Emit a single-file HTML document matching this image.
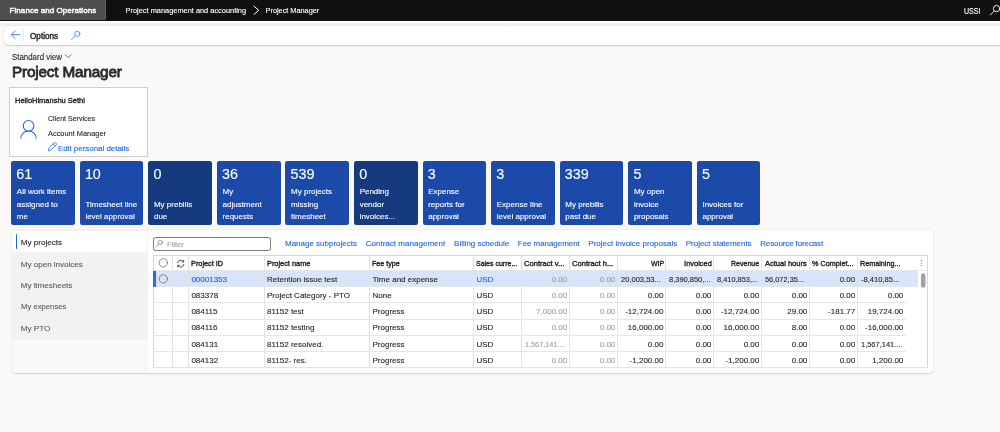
<!DOCTYPE html>
<html lang="en">
<head>
<meta charset="utf-8">
<title>Project Manager</title>
<style>
html,body{margin:0;padding:0;}
body{width:1000px;height:432px;overflow:hidden;background:#faf9f8;position:relative;
 font-family:"Liberation Sans",sans-serif;font-size:8px;color:#292827;-webkit-text-stroke:0.12px;}
.a{position:absolute;white-space:nowrap;line-height:1;}
.b{font-weight:700;}
#top{left:0;top:0;width:1000px;height:20.5px;background:#11100f;}
#fo{left:0;top:0;width:106.4px;height:20px;background:#504e4c;border-bottom-right-radius:2.5px;box-shadow:inset -0.7px 0 0 #6e6c6a;}
#strip{left:0;top:20.5px;width:1000px;height:5px;background:linear-gradient(#fff 0,#fff 35%,#f3f2f1 45%,#f5f4f3 100%);}
#tb{left:4px;top:25.5px;width:1000px;height:19.5px;background:#fff;border-radius:5px 0 0 5px;box-shadow:0 0.5px 1.5px rgba(0,0,0,.2);}
.lnk{color:#2266e3;}
#card{left:9.2px;top:87.2px;width:136.6px;height:67.6px;background:#fff;border:0.7px solid #d0cecc;}
.tile{position:absolute;top:160.9px;width:63.6px;height:63.9px;background:#1c4aa9;border-radius:2.2px;color:#fff;}
.tile.dk{background:#163a7f;}
.tile .n{position:absolute;left:5.4px;top:6.2px;font-size:13.7px;line-height:1;white-space:nowrap;}
.tile .l{position:absolute;left:5.7px;bottom:4.2px;font-size:8px;line-height:12.15px;white-space:nowrap;}
#panel{left:11.6px;top:229.8px;width:921.6px;height:143.6px;background:#fff;border-radius:4px;box-shadow:0 0.2px 0.6px rgba(0,0,0,.12),0 0.9px 2.1px rgba(0,0,0,.14);overflow:hidden;}
#left{left:0;top:0;width:136.5px;height:143.6px;background:#faf9f8;}
#tabs{left:0;top:0;width:136.5px;height:109.8px;background:#f3f2f1;}
#sel{left:0.7px;top:1.2px;width:134.4px;height:21.1px;background:#fff;border-radius:2.5px 1.8px 1.8px 2.5px;}
#selbar{left:4.1px;top:4.6px;width:1.5px;height:14.6px;background:#2266e3;border-radius:1px;}
.tab{left:9.2px;font-size:8.6px;color:#605e5c;}
#filter{left:153.3px;top:237.2px;width:118.2px;height:13.9px;box-sizing:border-box;border:0.95px solid #807e7c;border-radius:2.2px;background:#fff;}
#grid{left:153.2px;top:255.4px;width:775px;height:112.4px;border:0.6px solid #d8d6d4;border-bottom-color:#e4e2e0;box-sizing:border-box;background:#fff;}
.vl{position:absolute;top:255.4px;width:0.6px;height:112.4px;background:#e4e2e0;}
.hl{position:absolute;left:153.2px;width:752.6px;height:0.6px;background:#e8e6e4;}
#rowsel{left:153.5px;top:270.7px;width:764.3px;height:16.1px;background:#d8e4fa;}
#rowbar{left:153.4px;top:270.7px;width:2.2px;height:16.1px;background:#2b6be6;}
.c{position:absolute;white-space:nowrap;line-height:1;font-size:8px;}
.r{text-align:right;}
.g{color:#a19f9d;}
</style>
</head>
<body>
<div id="app" class="a" style="left:0;top:0;width:1000px;height:432px;will-change:transform">
<div class="a" id="top"></div>
<div class="a" id="fo"></div>
<div class="a" id="strip"></div>
<div class="a" id="tb"></div>
<div class="a" id="card"></div>
<div class="a" id="panel"><div class="a" id="left"></div><div class="a" id="tabs"></div><div class="a" id="sel"></div><div class="a" id="selbar"></div></div>
<div class="a" id="filter"></div>
<div class="a" id="grid"></div>
<div class="tile" style="left:11.24px"></div>
<div class="tile" style="left:79.80px"></div>
<div class="tile dk" style="left:148.36px"></div>
<div class="tile" style="left:216.92px"></div>
<div class="tile" style="left:285.48px"></div>
<div class="tile dk" style="left:354.04px"></div>
<div class="tile" style="left:422.60px"></div>
<div class="tile" style="left:491.16px"></div>
<div class="tile" style="left:559.72px"></div>
<div class="tile" style="left:628.28px"></div>
<div class="tile" style="left:696.84px"></div>
<div class="a" id="rowsel"></div>
<div class="vl" style="left:172.10px"></div>
<div class="vl" style="left:188.10px"></div>
<div class="vl" style="left:263.70px"></div>
<div class="vl" style="left:369.20px"></div>
<div class="vl" style="left:473.20px"></div>
<div class="vl" style="left:521.20px"></div>
<div class="vl" style="left:569.20px"></div>
<div class="vl" style="left:617.30px"></div>
<div class="vl" style="left:665.40px"></div>
<div class="vl" style="left:713.30px"></div>
<div class="vl" style="left:761.20px"></div>
<div class="vl" style="left:809.30px"></div>
<div class="vl" style="left:857.20px"></div>
<div class="hl" style="top:270.00px;width:775px"></div>
<div class="hl" style="top:286.20px"></div>
<div class="hl" style="top:302.40px"></div>
<div class="hl" style="top:318.60px"></div>
<div class="hl" style="top:334.80px"></div>
<div class="hl" style="top:351.00px"></div>
<div class="a" id="rowbar"></div>
<svg class="a" style="left:0;top:0" width="1000" height="432" viewBox="0 0 1000 432" fill="none" stroke-linecap="round" stroke-linejoin="round">
<!-- breadcrumb chevron -->
<path d="M254 6.2 L258.8 10.3 L254 14.4" stroke="#fff" stroke-width="1"/>
<!-- top-right search -->
<circle cx="996.6" cy="8.6" r="3.2" stroke="#fff" stroke-width="0.9"/>
<path d="M994.3 11 L990.3 15" stroke="#fff" stroke-width="0.9"/>
<!-- back arrow -->
<path d="M20 34.7 H11.4 M15.3 30.9 L11.3 34.7 L15.3 38.6" stroke="#2266e3" stroke-width="0.8"/>
<!-- separator -->
<path d="M23.5 29 V41.5" stroke="#e1dfdd" stroke-width="0.6"/>
<!-- toolbar search -->
<circle cx="77.3" cy="33.85" r="2.6" stroke="#2266e3" stroke-width="0.7"/>
<path d="M75.4 35.8 L71.6 39.6" stroke="#2266e3" stroke-width="0.7"/>
<!-- view chevron -->
<path d="M65.3 54.8 L68.2 57.7 L71.1 54.8" stroke="#323130" stroke-width="0.65"/>
<!-- person -->
<circle cx="28.55" cy="125.8" r="5.35" stroke="#2266e3" stroke-width="1.05"/>
<path d="M20.7 138.7 A7.8 7.8 0 0 1 36.3 138.7" stroke="#2266e3" stroke-width="1.05" stroke-linecap="butt"/>
<!-- pencil -->
<path d="M48.4 150.5 L49.2 147.6 L54.2 142.9 Q55.3 142.3 56.1 143.2 Q56.9 144.2 56.1 145.1 L51.2 149.7 Z M53.2 143.9 L55.1 146" stroke="#2266e3" stroke-width="0.75"/>
<!-- filter magnifier -->
<circle cx="160.4" cy="242.5" r="2.15" stroke="#777573" stroke-width="0.7"/>
<path d="M158.8 244.1 L156 246.8" stroke="#777573" stroke-width="0.7"/>
<!-- header / row circles -->
<circle cx="163.3" cy="262.8" r="4.15" stroke="#605e5c" stroke-width="0.7" fill="#fff"/>
<circle cx="163.3" cy="278.85" r="4.15" stroke="#605e5c" stroke-width="0.7"/>
<!-- refresh -->
<g stroke="#323130" stroke-width="0.8" transform="translate(0.2,0.35)">
<path d="M177.3 262.5 A3.3 3.3 0 0 1 183.3 261.3"/>
<path d="M183.7 264 A3.3 3.3 0 0 1 177.7 265.2"/>
<path d="M183.5 259.9 V261.5 H181.9"/>
<path d="M177.5 266.6 V265 H179.1"/>
</g>
<!-- grid options dots -->
<g fill="#484644" stroke="none"><circle cx="921.3" cy="260.4" r="0.55"/><circle cx="921.3" cy="263" r="0.55"/><circle cx="921.3" cy="265.6" r="0.55"/></g>
<!-- scrollbar thumb -->
<rect x="920.9" y="273.3" width="4.6" height="14.4" rx="2.3" fill="#a3a2a0" stroke="none"/>
</svg>

<span class="a" style="top:6px;line-height:9px;font-size:8px;color:#fff;-webkit-text-stroke:0.40px;letter-spacing:0.055px;left:9.60px">Finance and Operations</span>
<span class="a" style="top:6px;line-height:9px;font-size:7.4px;color:#fff;letter-spacing:0.003px;left:125.60px">Project management and accounting</span>
<span class="a" style="top:6px;line-height:9px;font-size:7.4px;color:#fff;letter-spacing:-0.042px;left:265.60px">Project Manager</span>
<span class="a" style="top:6px;line-height:10px;font-size:8.5px;color:#fff;left:964.00px;transform:scaleX(0.8315);transform-origin:left center">USSI</span>
<span class="a" style="top:31px;line-height:10px;font-size:8.6px;color:#292827;-webkit-text-stroke:0.43px;left:29.60px;transform:scaleX(0.9516);transform-origin:left center">Options</span>
<span class="a" style="top:52px;line-height:10px;font-size:8.6px;color:#292827;left:12.00px;transform:scaleX(0.9180);transform-origin:left center">Standard view</span>
<span class="a ttl" style="top:63px;line-height:17px;font-size:15.3px;color:#292827;-webkit-text-stroke:0.77px;letter-spacing:-0.173px;left:12.00px">Project Manager</span>
<span class="a" style="top:97px;line-height:7px;font-size:7px;color:#292827;-webkit-text-stroke:0.35px;left:14.80px;transform:scaleX(1.0681);transform-origin:left center">HelloHimanshu Sethi</span>
<span class="a" style="top:114px;line-height:9px;font-size:7.9px;color:#292827;left:47.50px;transform:scaleX(0.8931);transform-origin:left center">Client Services</span>
<span class="a" style="top:129px;line-height:9px;font-size:7.9px;color:#292827;left:47.50px;transform:scaleX(0.9376);transform-origin:left center">Account Manager</span>
<span class="a" style="top:144px;line-height:9px;font-size:8px;color:#2266e3;letter-spacing:-0.036px;left:58.00px">Edit personal details</span>
<span class="a" style="top:166px;line-height:16px;font-size:14.3px;color:#fff;left:16.34px">61</span>
<span class="a" style="top:187px;line-height:9px;font-size:8px;color:#fff;left:16.84px">All work items</span>
<span class="a" style="top:200px;line-height:9px;font-size:8px;color:#fff;left:16.84px">assigned to</span>
<span class="a" style="top:212px;line-height:9px;font-size:8px;color:#fff;left:16.84px">me</span>
<span class="a" style="top:166px;line-height:16px;font-size:14.3px;color:#fff;left:84.90px">10</span>
<span class="a" style="top:200px;line-height:9px;font-size:8px;color:#fff;left:85.40px">Timesheet line</span>
<span class="a" style="top:212px;line-height:9px;font-size:8px;color:#fff;left:85.40px">level approval</span>
<span class="a" style="top:166px;line-height:16px;font-size:14.3px;color:#fff;left:153.46px">0</span>
<span class="a" style="top:200px;line-height:9px;font-size:8px;color:#fff;left:153.96px">My prebills</span>
<span class="a" style="top:212px;line-height:9px;font-size:8px;color:#fff;left:153.96px">due</span>
<span class="a" style="top:166px;line-height:16px;font-size:14.3px;color:#fff;left:222.02px">36</span>
<span class="a" style="top:187px;line-height:9px;font-size:8px;color:#fff;left:222.52px">My</span>
<span class="a" style="top:200px;line-height:9px;font-size:8px;color:#fff;left:222.52px">adjustment</span>
<span class="a" style="top:212px;line-height:9px;font-size:8px;color:#fff;left:222.52px">requests</span>
<span class="a" style="top:166px;line-height:16px;font-size:14.3px;color:#fff;left:290.58px">539</span>
<span class="a" style="top:187px;line-height:9px;font-size:8px;color:#fff;left:291.08px">My projects</span>
<span class="a" style="top:200px;line-height:9px;font-size:8px;color:#fff;left:291.08px">missing</span>
<span class="a" style="top:212px;line-height:9px;font-size:8px;color:#fff;left:291.08px">timesheet</span>
<span class="a" style="top:166px;line-height:16px;font-size:14.3px;color:#fff;left:359.14px">0</span>
<span class="a" style="top:187px;line-height:9px;font-size:8px;color:#fff;left:359.64px">Pending</span>
<span class="a" style="top:200px;line-height:9px;font-size:8px;color:#fff;left:359.64px">vendor</span>
<span class="a" style="top:212px;line-height:9px;font-size:8px;color:#fff;left:359.64px">invoices...</span>
<span class="a" style="top:166px;line-height:16px;font-size:14.3px;color:#fff;left:427.70px">3</span>
<span class="a" style="top:187px;line-height:9px;font-size:8px;color:#fff;left:428.20px">Expense</span>
<span class="a" style="top:200px;line-height:9px;font-size:8px;color:#fff;left:428.20px">reports for</span>
<span class="a" style="top:212px;line-height:9px;font-size:8px;color:#fff;left:428.20px">approval</span>
<span class="a" style="top:166px;line-height:16px;font-size:14.3px;color:#fff;left:496.26px">3</span>
<span class="a" style="top:200px;line-height:9px;font-size:8px;color:#fff;left:496.76px">Expense line</span>
<span class="a" style="top:212px;line-height:9px;font-size:8px;color:#fff;left:496.76px">level approval</span>
<span class="a" style="top:166px;line-height:16px;font-size:14.3px;color:#fff;left:564.82px">339</span>
<span class="a" style="top:200px;line-height:9px;font-size:8px;color:#fff;left:565.32px">My prebills</span>
<span class="a" style="top:212px;line-height:9px;font-size:8px;color:#fff;left:565.32px">past due</span>
<span class="a" style="top:166px;line-height:16px;font-size:14.3px;color:#fff;left:633.38px">5</span>
<span class="a" style="top:187px;line-height:9px;font-size:8px;color:#fff;left:633.88px">My open</span>
<span class="a" style="top:200px;line-height:9px;font-size:8px;color:#fff;left:633.88px">invoice</span>
<span class="a" style="top:212px;line-height:9px;font-size:8px;color:#fff;left:633.88px">proposals</span>
<span class="a" style="top:166px;line-height:16px;font-size:14.3px;color:#fff;left:701.94px">5</span>
<span class="a" style="top:200px;line-height:9px;font-size:8px;color:#fff;left:702.44px">Invoices for</span>
<span class="a" style="top:212px;line-height:9px;font-size:8px;color:#fff;left:702.44px">approval</span>
<span class="a" style="top:238px;line-height:9px;font-size:8.1px;color:#292827;letter-spacing:-0.013px;left:20.80px">My projects</span>
<span class="a" style="top:260px;line-height:9px;font-size:8.1px;color:#605e5c;letter-spacing:-0.034px;left:20.80px">My open invoices</span>
<span class="a" style="top:281px;line-height:9px;font-size:8.1px;color:#605e5c;letter-spacing:-0.053px;left:20.80px">My timesheets</span>
<span class="a" style="top:302px;line-height:9px;font-size:8.1px;color:#605e5c;left:20.80px;transform:scaleX(0.9520);transform-origin:left center">My expenses</span>
<span class="a" style="top:324px;line-height:9px;font-size:8.1px;color:#605e5c;left:20.80px">My PTO</span>
<span class="a" style="top:240px;line-height:9px;font-size:8px;color:#a19f9d;left:166.50px;transform:scaleX(0.9392);transform-origin:left center">Filter</span>
<span class="a" style="top:239px;line-height:9px;font-size:8px;color:#2266e3;letter-spacing:-0.003px;left:285.00px">Manage subprojects</span>
<span class="a" style="top:239px;line-height:9px;font-size:8px;color:#2266e3;letter-spacing:0.023px;left:365.70px">Contract management</span>
<span class="a" style="top:239px;line-height:9px;font-size:8px;color:#2266e3;letter-spacing:-0.031px;left:454.10px">Billing schedule</span>
<span class="a" style="top:239px;line-height:9px;font-size:8px;color:#2266e3;letter-spacing:-0.057px;left:517.80px">Fee management</span>
<span class="a" style="top:239px;line-height:9px;font-size:8px;color:#2266e3;letter-spacing:-0.001px;left:588.30px">Project invoice proposals</span>
<span class="a" style="top:239px;line-height:9px;font-size:8px;color:#2266e3;letter-spacing:-0.025px;left:685.80px">Project statements</span>
<span class="a" style="top:239px;line-height:9px;font-size:8px;color:#2266e3;letter-spacing:-0.119px;left:760.20px">Resource forecast</span>
<span class="a" style="top:259px;line-height:9px;font-size:8px;-webkit-text-stroke:0.40px;left:190.75px;transform:scaleX(0.9148);transform-origin:left center">Project ID</span>
<span class="a" style="top:259px;line-height:9px;font-size:8px;-webkit-text-stroke:0.40px;left:267.00px;transform:scaleX(0.9203);transform-origin:left center">Project name</span>
<span class="a" style="top:259px;line-height:9px;font-size:8px;-webkit-text-stroke:0.40px;left:371.70px;transform:scaleX(0.8909);transform-origin:left center">Fee type</span>
<span class="a" style="top:259px;line-height:9px;font-size:8px;-webkit-text-stroke:0.40px;left:476.20px;transform:scaleX(0.8750);transform-origin:left center">Sales curre...</span>
<span class="a" style="top:259px;line-height:9px;font-size:8px;-webkit-text-stroke:0.40px;left:523.80px;transform:scaleX(0.9504);transform-origin:left center">Contract v...</span>
<span class="a" style="top:259px;line-height:9px;font-size:8px;-webkit-text-stroke:0.40px;left:571.90px;transform:scaleX(0.9459);transform-origin:left center">Contract h...</span>
<span class="a" style="top:259px;line-height:9px;font-size:8px;-webkit-text-stroke:0.40px;right:336.30px;transform:scaleX(0.8704);transform-origin:right center">WIP</span>
<span class="a" style="top:259px;line-height:9px;font-size:8px;-webkit-text-stroke:0.40px;right:288.70px;transform:scaleX(0.9306);transform-origin:right center">Invoiced</span>
<span class="a" style="top:259px;line-height:9px;font-size:8px;-webkit-text-stroke:0.40px;right:240.90px;transform:scaleX(0.8726);transform-origin:right center">Revenue</span>
<span class="a" style="top:259px;line-height:9px;font-size:8px;-webkit-text-stroke:0.40px;left:765.10px;transform:scaleX(0.9383);transform-origin:left center">Actual hours</span>
<span class="a" style="top:259px;line-height:9px;font-size:8px;-webkit-text-stroke:0.40px;left:812.40px;transform:scaleX(0.9070);transform-origin:left center">% Complet...</span>
<span class="a" style="top:259px;line-height:9px;font-size:8px;-webkit-text-stroke:0.40px;left:860.00px;transform:scaleX(0.9002);transform-origin:left center">Remaining...</span>
<span class="a" style="top:275px;line-height:9px;font-size:8px;color:#2266e3;left:191.40px">00001353</span>
<span class="a" style="top:275px;line-height:9px;font-size:8px;color:#292827;left:267.00px">Retention issue test</span>
<span class="a" style="top:275px;line-height:9px;font-size:8px;color:#292827;left:372.50px">Time and expense</span>
<span class="a" style="top:275px;line-height:9px;font-size:8px;color:#2266e3;left:476.50px">USD</span>
<span class="a" style="top:275px;line-height:9px;font-size:8px;color:#a19f9d;right:432.80px">0.00</span>
<span class="a" style="top:275px;line-height:9px;font-size:8px;color:#a19f9d;right:384.70px">0.00</span>
<span class="a" style="top:275px;line-height:9px;font-size:8px;color:#292827;left:620.70px;transform:scaleX(0.9417);transform-origin:left center">20,003,53...</span>
<span class="a" style="top:275px;line-height:9px;font-size:8px;color:#292827;left:668.80px;transform:scaleX(0.9352);transform-origin:left center">8,390,850,...</span>
<span class="a" style="top:275px;line-height:9px;font-size:8px;color:#292827;left:716.70px;transform:scaleX(0.9239);transform-origin:left center">8,410,853,...</span>
<span class="a" style="top:275px;line-height:9px;font-size:8px;color:#292827;left:764.60px;transform:scaleX(0.9227);transform-origin:left center">56,072,35...</span>
<span class="a" style="top:275px;line-height:9px;font-size:8px;color:#292827;right:144.80px">0.00</span>
<span class="a" style="top:275px;line-height:9px;font-size:8px;color:#292827;left:860.60px;transform:scaleX(0.9485);transform-origin:left center">-8,410,85...</span>
<span class="a" style="top:291px;line-height:9px;font-size:8px;color:#292827;left:191.40px">083378</span>
<span class="a" style="top:291px;line-height:9px;font-size:8px;color:#292827;left:267.00px">Project Category - PTO</span>
<span class="a" style="top:291px;line-height:9px;font-size:8px;color:#292827;left:372.50px">None</span>
<span class="a" style="top:291px;line-height:9px;font-size:8px;color:#292827;left:476.50px">USD</span>
<span class="a" style="top:291px;line-height:9px;font-size:8px;color:#a19f9d;right:432.80px">0.00</span>
<span class="a" style="top:291px;line-height:9px;font-size:8px;color:#a19f9d;right:384.70px">0.00</span>
<span class="a" style="top:291px;line-height:9px;font-size:8px;color:#292827;right:336.60px">0.00</span>
<span class="a" style="top:291px;line-height:9px;font-size:8px;color:#292827;right:288.70px">0.00</span>
<span class="a" style="top:291px;line-height:9px;font-size:8px;color:#292827;right:240.80px">0.00</span>
<span class="a" style="top:291px;line-height:9px;font-size:8px;color:#292827;right:192.70px">0.00</span>
<span class="a" style="top:291px;line-height:9px;font-size:8px;color:#292827;right:144.80px">0.00</span>
<span class="a" style="top:291px;line-height:9px;font-size:8px;color:#292827;right:96.70px">0.00</span>
<span class="a" style="top:307px;line-height:9px;font-size:8px;color:#292827;left:191.40px">084115</span>
<span class="a" style="top:307px;line-height:9px;font-size:8px;color:#292827;left:267.00px">81152 test</span>
<span class="a" style="top:307px;line-height:9px;font-size:8px;color:#292827;left:372.50px">Progress</span>
<span class="a" style="top:307px;line-height:9px;font-size:8px;color:#292827;left:476.50px">USD</span>
<span class="a" style="top:307px;line-height:9px;font-size:8px;color:#a19f9d;right:432.80px">7,000.00</span>
<span class="a" style="top:307px;line-height:9px;font-size:8px;color:#a19f9d;right:384.70px">0.00</span>
<span class="a" style="top:307px;line-height:9px;font-size:8px;color:#292827;right:336.60px">-12,724.00</span>
<span class="a" style="top:307px;line-height:9px;font-size:8px;color:#292827;right:288.70px">0.00</span>
<span class="a" style="top:307px;line-height:9px;font-size:8px;color:#292827;right:240.80px">-12,724.00</span>
<span class="a" style="top:307px;line-height:9px;font-size:8px;color:#292827;right:192.70px">29.00</span>
<span class="a" style="top:307px;line-height:9px;font-size:8px;color:#292827;right:144.80px">-181.77</span>
<span class="a" style="top:307px;line-height:9px;font-size:8px;color:#292827;right:96.70px">19,724.00</span>
<span class="a" style="top:323px;line-height:9px;font-size:8px;color:#292827;left:191.40px">084116</span>
<span class="a" style="top:323px;line-height:9px;font-size:8px;color:#292827;left:267.00px">81152 testing</span>
<span class="a" style="top:323px;line-height:9px;font-size:8px;color:#292827;left:372.50px">Progress</span>
<span class="a" style="top:323px;line-height:9px;font-size:8px;color:#292827;left:476.50px">USD</span>
<span class="a" style="top:323px;line-height:9px;font-size:8px;color:#a19f9d;right:432.80px">0.00</span>
<span class="a" style="top:323px;line-height:9px;font-size:8px;color:#a19f9d;right:384.70px">0.00</span>
<span class="a" style="top:323px;line-height:9px;font-size:8px;color:#292827;right:336.60px">16,000.00</span>
<span class="a" style="top:323px;line-height:9px;font-size:8px;color:#292827;right:288.70px">0.00</span>
<span class="a" style="top:323px;line-height:9px;font-size:8px;color:#292827;right:240.80px">16,000.00</span>
<span class="a" style="top:323px;line-height:9px;font-size:8px;color:#292827;right:192.70px">8.00</span>
<span class="a" style="top:323px;line-height:9px;font-size:8px;color:#292827;right:144.80px">0.00</span>
<span class="a" style="top:323px;line-height:9px;font-size:8px;color:#292827;right:96.70px">-16,000.00</span>
<span class="a" style="top:340px;line-height:9px;font-size:8px;color:#292827;left:191.40px">084131</span>
<span class="a" style="top:340px;line-height:9px;font-size:8px;color:#292827;left:267.00px">81152 resolved.</span>
<span class="a" style="top:340px;line-height:9px;font-size:8px;color:#292827;left:372.50px">Progress</span>
<span class="a" style="top:340px;line-height:9px;font-size:8px;color:#292827;left:476.50px">USD</span>
<span class="a" style="top:340px;line-height:9px;font-size:8px;color:#a19f9d;left:524.60px;transform:scaleX(0.9104);transform-origin:left center">1,567,141....</span>
<span class="a" style="top:340px;line-height:9px;font-size:8px;color:#a19f9d;right:384.70px">0.00</span>
<span class="a" style="top:340px;line-height:9px;font-size:8px;color:#292827;right:336.60px">0.00</span>
<span class="a" style="top:340px;line-height:9px;font-size:8px;color:#292827;right:288.70px">0.00</span>
<span class="a" style="top:340px;line-height:9px;font-size:8px;color:#292827;right:240.80px">0.00</span>
<span class="a" style="top:340px;line-height:9px;font-size:8px;color:#292827;right:192.70px">0.00</span>
<span class="a" style="top:340px;line-height:9px;font-size:8px;color:#292827;right:144.80px">0.00</span>
<span class="a" style="top:340px;line-height:9px;font-size:8px;color:#292827;left:860.60px;transform:scaleX(0.9329);transform-origin:left center">1,567,141....</span>
<span class="a" style="top:356px;line-height:9px;font-size:8px;color:#292827;left:191.40px">084132</span>
<span class="a" style="top:356px;line-height:9px;font-size:8px;color:#292827;left:267.00px">81152- res.</span>
<span class="a" style="top:356px;line-height:9px;font-size:8px;color:#292827;left:372.50px">Progress</span>
<span class="a" style="top:356px;line-height:9px;font-size:8px;color:#292827;left:476.50px">USD</span>
<span class="a" style="top:356px;line-height:9px;font-size:8px;color:#a19f9d;right:432.80px">0.00</span>
<span class="a" style="top:356px;line-height:9px;font-size:8px;color:#a19f9d;right:384.70px">0.00</span>
<span class="a" style="top:356px;line-height:9px;font-size:8px;color:#292827;right:336.60px">-1,200.00</span>
<span class="a" style="top:356px;line-height:9px;font-size:8px;color:#292827;right:288.70px">0.00</span>
<span class="a" style="top:356px;line-height:9px;font-size:8px;color:#292827;right:240.80px">-1,200.00</span>
<span class="a" style="top:356px;line-height:9px;font-size:8px;color:#292827;right:192.70px">0.00</span>
<span class="a" style="top:356px;line-height:9px;font-size:8px;color:#292827;right:144.80px">0.00</span>
<span class="a" style="top:356px;line-height:9px;font-size:8px;color:#292827;right:96.70px">1,200.00</span>
</div>
</body>
</html>
